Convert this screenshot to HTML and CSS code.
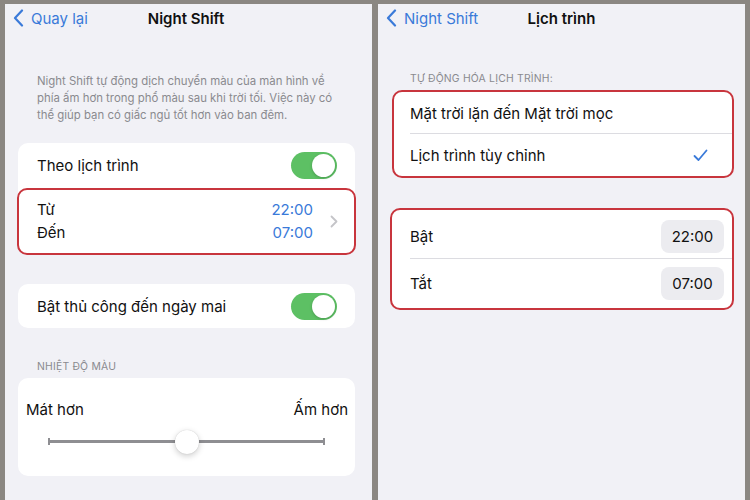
FILE: index.html
```html
<!DOCTYPE html>
<html lang="vi">
<head>
    <meta charset="UTF-8">
    <meta name="viewport" content="width=device-width, initial-scale=1.0">
    <title>Night Shift</title>
    <link rel="stylesheet" href="styles.css">
</head>
<body>
    <div class="screens">
        <!-- Night Shift settings -->
        <div class="screen screen-left">
            <div class="nav">
                <a class="nav-back" href="#">
                    <svg width="11" height="18" viewBox="0 0 11 18"><path d="M9 1.5 L2 9 L9 16.5" fill="none" stroke="currentColor" stroke-width="2.2" stroke-linecap="round" stroke-linejoin="round"/></svg>
                    <span>Quay lại</span>
                </a>
                <div class="nav-title">Night Shift</div>
            </div>

            <p class="description">Night Shift tự động dịch chuyển màu của màn hình về phía ấm hơn trong phổ màu sau khi trời tối. Việc này có thể giúp bạn có giấc ngủ tốt hơn vào ban đêm.</p>

            <div class="card card-first">
                <div class="row">
                    <span>Theo lịch trình</span>
                    <span class="toggle"></span>
                </div>
                <div class="row row-times marked">
                    <div class="time-labels">
                        <span>Từ</span>
                        <span>Đến</span>
                    </div>
                    <div class="time-values">
                        <span>22:00</span>
                        <span>07:00</span>
                    </div>
                    <svg class="chevron" width="8" height="13" viewBox="0 0 8 13"><path d="M1.5 1.5 L6.5 6.5 L1.5 11.5" fill="none" stroke="#c4c4c8" stroke-width="1.8" stroke-linecap="round" stroke-linejoin="round"/></svg>
                </div>
            </div>

            <div class="card card-manual">
                <div class="row">
                    <span>Bật thủ công đến ngày mai</span>
                    <span class="toggle"></span>
                </div>
            </div>

            <div class="section-header header-temp">NHIỆT ĐỘ MÀU</div>
            <div class="card card-slider">
                <div class="slider-labels">
                    <span>Mát hơn</span>
                    <span>Ấm hơn</span>
                </div>
                <div class="slider">
                    <div class="track"></div>
                    <div class="thumb"></div>
                </div>
            </div>
        </div>

        <!-- Schedule -->
        <div class="screen screen-right">
            <div class="nav">
                <a class="nav-back" href="#">
                    <svg width="11" height="18" viewBox="0 0 11 18"><path d="M9 1.5 L2 9 L9 16.5" fill="none" stroke="currentColor" stroke-width="2.2" stroke-linecap="round" stroke-linejoin="round"/></svg>
                    <span>Night Shift</span>
                </a>
                <div class="nav-title">Lịch trình</div>
            </div>

            <div class="section-header header-auto">TỰ ĐỘNG HÓA LỊCH TRÌNH:</div>
            <div class="card card-choice marked">
                <div class="row row-line">
                    <span>Mặt trời lặn đến Mặt trời mọc</span>
                </div>
                <div class="row">
                    <span>Lịch trình tùy chỉnh</span>
                    <svg class="check" width="15" height="13" viewBox="0 0 15 13"><path d="M1.5 7 L5.5 11 L13.5 1.5" fill="none" stroke="#3a7ad9" stroke-width="1.8" stroke-linecap="round" stroke-linejoin="round"/></svg>
                </div>
            </div>

            <div class="card card-times marked">
                <div class="row row-tall row-line">
                    <span>Bật</span>
                    <span class="pill">22:00</span>
                </div>
                <div class="row row-tall">
                    <span>Tắt</span>
                    <span class="pill">07:00</span>
                </div>
            </div>
        </div>
    </div>
</body>
</html>
```

FILE: styles.css
```css
* {
    box-sizing: border-box;
}

body {
    margin: 0;
    background-color: #8b8782;
    font-family: Inter, "Noto Sans", sans-serif;
    color: #111;
    overflow: hidden;
}

.screens {
    display: flex;
    gap: 6px;
    padding: 4px 5px 0;
    height: 500px;
}

.screen {
    width: 367px;
    height: 496px;
    background-color: #f1f1f6;
    display: flex;
    flex-direction: column;
}

/* navigation bar */
.nav {
    position: relative;
    height: 28px;
    display: flex;
    align-items: center;
}

.nav-back {
    display: flex;
    align-items: center;
    gap: 7px;
    padding-left: 8px;
    color: #3a7ad9;
    text-decoration: none;
    font-size: 15px;
}

.nav-title {
    position: absolute;
    left: 0;
    right: 0;
    text-align: center;
    font-size: 15px;
    font-weight: 600;
    pointer-events: none;
}

.screen-left .nav-title {
    right: 5px;
}

.description {
    margin: 41px 0 0;
    padding: 0 30px 0 32px;
    font-size: 11.4px;
    line-height: 17px;
    color: #8a8a8f;
}

/* grouped cards */
.card {
    background-color: #fff;
    border-radius: 10px;
}

.screen-left .card {
    margin: 0 17px 0 13px;
}

.screen-right .card {
    margin: 0 11px 0 14px;
}

.marked {
    border: 2px solid #c8353d;
}

.row {
    display: flex;
    align-items: center;
    justify-content: space-between;
    height: 45px;
    padding: 0 18px 0 19px;
    font-size: 15px;
}

.card-first {
    margin-top: 19px !important;
}

.row-times {
    height: 67px;
    margin: 0 -1px -1px;
    border-radius: 10px;
    padding: 0 16px 0 18px;
}

.time-labels,
.time-values {
    display: flex;
    flex-direction: column;
    gap: 5px;
    line-height: 18px;
}

.time-labels {
    flex: 1;
}

.time-values {
    color: #3a7ad9;
    text-align: right;
    margin-right: 17px;
}

.toggle {
    position: relative;
    width: 46px;
    height: 27px;
    border-radius: 14px;
    background-color: #5dc064;
}

.toggle::after {
    content: "";
    position: absolute;
    top: 2px;
    right: 2px;
    width: 23px;
    height: 23px;
    border-radius: 50%;
    background-color: #fff;
    box-shadow: 0 1px 3px rgba(0, 0, 0, 0.2);
}

.card-manual {
    margin-top: 30px !important;
}

.card-manual .row {
    height: 44px;
}

.section-header {
    font-size: 10.4px;
    line-height: 14px;
    color: #8a8a8f;
    padding-left: 32px;
    letter-spacing: 0.2px;
}

.header-temp {
    margin-top: 32px;
}

/* colour temperature slider */
.card-slider {
    margin-top: 4px !important;
    height: 98px;
    padding: 23px 7px 0 8px;
}

.slider-labels {
    display: flex;
    justify-content: space-between;
    font-size: 15px;
    line-height: 18px;
}

.slider {
    position: relative;
    height: 24px;
    margin: 11px 23px 0 22px;
}

.track {
    position: absolute;
    left: 0;
    right: 0;
    top: 10px;
    height: 3px;
    background-color: #8e8e92;
}

.track::before,
.track::after {
    content: "";
    position: absolute;
    top: -2px;
    width: 2px;
    height: 7px;
    background-color: #8e8e92;
}

.track::before {
    left: 0;
}

.track::after {
    right: 0;
}

.thumb {
    position: absolute;
    left: 127px;
    top: 0;
    width: 24px;
    height: 24px;
    border-radius: 50%;
    background-color: #fff;
    box-shadow: 0 2px 6px rgba(0, 0, 0, 0.2), 0 0 1px rgba(0, 0, 0, 0.2);
}

/* schedule screen */
.header-auto {
    margin-top: 40px;
}

.card-choice {
    margin-top: 4px !important;
}

.card-choice .row {
    height: 42px;
    padding: 0 24px 0 16px;
}

.row-line {
    position: relative;
}

.row-line::after {
    content: "";
    position: absolute;
    left: 16px;
    right: 0;
    bottom: 0;
    height: 1px;
    background-color: #dcdce1;
}

.card-times {
    margin: 30px 11px 0 12px !important;
}

.row-tall {
    height: 49px;
    padding: 0 8px 0 18px;
}

.row-tall:first-child {
    padding-top: 3px;
}

.card-times .row-line::after {
    left: 18px;
}

.pill {
    width: 63px;
    height: 33px;
    border-radius: 8px;
    background-color: #ececf0;
    display: flex;
    align-items: center;
    justify-content: center;
    font-size: 15px;
}
```
